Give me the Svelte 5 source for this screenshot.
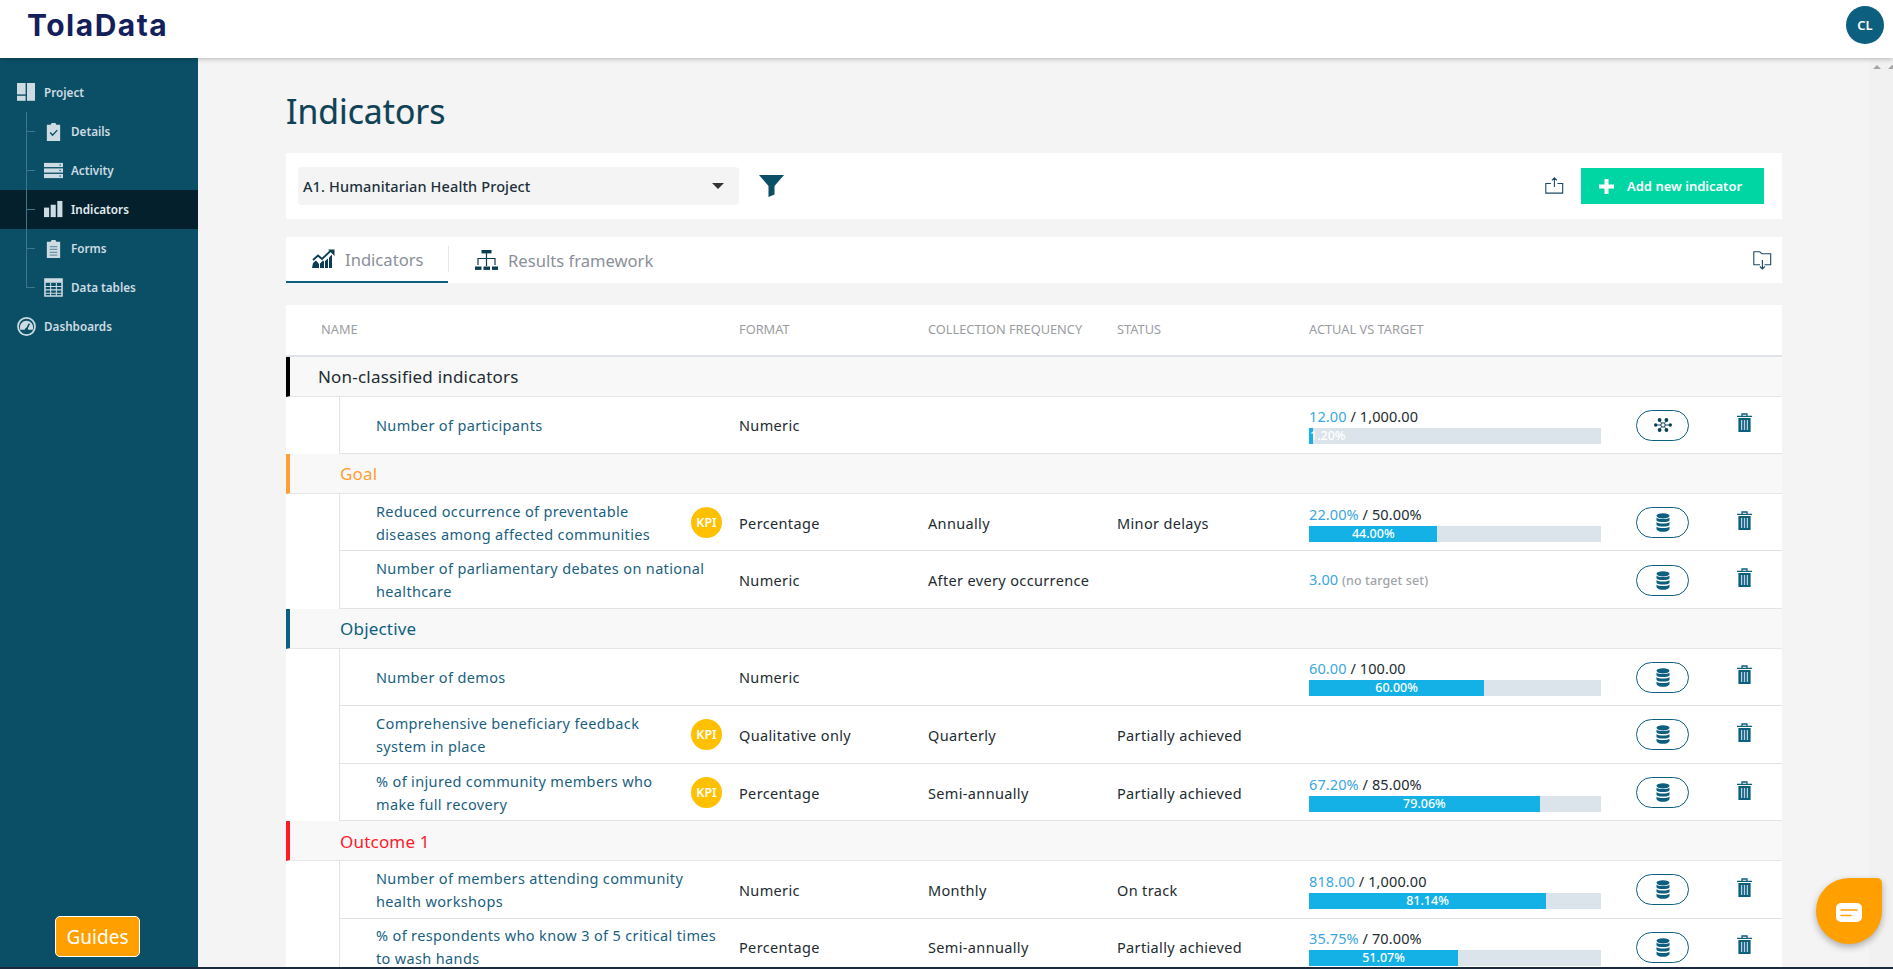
<script lang="ts">
	type Row = {
		name: string[];
		kpi?: boolean;
		format: string;
		freq?: string;
		status?: string;
		actual?: string;
		target?: string;
		percent?: number;
		label?: string;
		noTarget?: boolean;
		linked?: boolean;
	};
	type Level = { title: string; color: string; top?: boolean; rows: Row[] };

	const nav = [
		{ label: 'Details', icon: 'details' },
		{ label: 'Activity', icon: 'activity' },
		{ label: 'Indicators', icon: 'indicators', active: true },
		{ label: 'Forms', icon: 'forms' },
		{ label: 'Data tables', icon: 'tables' }
	];

	const levels: Level[] = [
		{
			title: 'Non-classified indicators',
			color: '#000000',
			top: true,
			rows: [
				{ name: ['Number of participants'], format: 'Numeric', actual: '12.00', target: '1,000.00', percent: 1.2, label: '1.20%', linked: true }
			]
		},
		{
			title: 'Goal',
			color: '#ff9f33',
			rows: [
				{ name: ['Reduced occurrence of preventable', 'diseases among affected communities'], kpi: true, format: 'Percentage', freq: 'Annually', status: 'Minor delays', actual: '22.00%', target: '50.00%', percent: 44, label: '44.00%' },
				{ name: ['Number of parliamentary debates on national', 'healthcare'], format: 'Numeric', freq: 'After every occurrence', actual: '3.00', noTarget: true }
			]
		},
		{
			title: 'Objective',
			color: '#0d5f7f',
			rows: [
				{ name: ['Number of demos'], format: 'Numeric', actual: '60.00', target: '100.00', percent: 60, label: '60.00%' },
				{ name: ['Comprehensive beneficiary feedback', 'system in place'], kpi: true, format: 'Qualitative only', freq: 'Quarterly', status: 'Partially achieved' },
				{ name: ['% of injured community members who', 'make full recovery'], kpi: true, format: 'Percentage', freq: 'Semi-annually', status: 'Partially achieved', actual: '67.20%', target: '85.00%', percent: 79.06, label: '79.06%' }
			]
		},
		{
			title: 'Outcome 1',
			color: '#ff1a2b',
			rows: [
				{ name: ['Number of members attending community', 'health workshops'], format: 'Numeric', freq: 'Monthly', status: 'On track', actual: '818.00', target: '1,000.00', percent: 81.14, label: '81.14%' },
				{ name: ['% of respondents who know 3 of 5 critical times', 'to wash hands'], format: 'Percentage', freq: 'Semi-annually', status: 'Partially achieved', actual: '35.75%', target: '70.00%', percent: 51.07, label: '51.07%' }
			]
		}
	];
</script>

{#snippet navIcon(kind: string)}
	<svg class="nav-icon" viewBox="0 0 20 20" fill="#cddbe2">
		{#if kind === 'details'}
			<path d="M3 3h4l1-2h4l1 2h4v17H3z" />
			<path d="M6.5 11l2.5 3 5-5.5" fill="none" stroke="#0b4f66" stroke-width="1.4" />
		{:else if kind === 'activity'}
			<rect x="0" y="2" width="20" height="4.4" />
			<rect x="0" y="7.8" width="20" height="4.4" />
			<rect x="0" y="13.6" width="20" height="4.4" />
			<circle cx="17" cy="4.2" r="0.8" fill="#0b4f66" />
			<circle cx="17" cy="10" r="0.8" fill="#0b4f66" />
			<circle cx="17" cy="15.8" r="0.8" fill="#0b4f66" />
		{:else if kind === 'indicators'}
			<rect x="0" y="8" width="5.4" height="10" />
			<rect x="7" y="5" width="5.4" height="13" />
			<rect x="14" y="1" width="5.4" height="17" />
		{:else if kind === 'forms'}
			<path d="M3 3h4l1-2h4l1 2h4v17H3z" />
			<path d="M6 8h8M6 11h8M6 14h8M6 17h8" stroke="#6d93a8" stroke-width="1.4" />
		{:else}
			<path d="M1 1h18v18H1z" fill="none" stroke="#cddbe2" stroke-width="1.6" />
			<rect x="1" y="1" width="18" height="4" />
			<path d="M1 9h18M1 12.5h18M1 16h18M7 5v14M13 5v14" stroke="#cddbe2" stroke-width="1.1" />
		{/if}
	</svg>
{/snippet}

{#snippet dbIcon()}
	<svg class="db" viewBox="0 0 14 19" fill="#0d5f7f">
		<ellipse cx="7" cy="2.8" rx="6.5" ry="2.6" />
		<path d="M.5 4.6C2 6.600 12 6.600 13.5 4.600v3C12 9.600 2 9.600.5 7.600z" />
		<path d="M.5 9C2 11 12 11 13.5 9v3C12 14 2 14 .5 12z" />
		<path d="M.5 13.400C2 15.400 12 15.400 13.500 13.400v2.800C12 19.600 2 19.600.5 16.200z" />
	</svg>
{/snippet}

{#snippet netIcon()}
	<svg class="net" viewBox="0 0 18 14" fill="#0b3f55">
		<path d="M1 7h16M5 2l8 10M13 2L5 12" stroke="#0b3f55" stroke-width="0.9" />
		<circle cx="9" cy="7" r="2.2" fill="#fff" stroke="#0b3f55" stroke-width="1" />
		<circle cx="1.700" cy="7" r="1.700" />
		<circle cx="16.300" cy="7" r="1.700" />
		<circle cx="5.600" cy="2" r="1.900" />
		<circle cx="12.400" cy="2" r="1.900" />
		<circle cx="5.600" cy="12" r="1.900" />
		<circle cx="12.400" cy="12" r="1.900" />
	</svg>
{/snippet}

{#snippet trashIcon()}
	<svg class="trash" viewBox="0 0 15 19">
		<path d="M5 3V1h5v2M0 3.4h15" fill="none" stroke="#0d5f7f" stroke-width="1.3" />
		<path d="M1.4 5h12.2v14H1.4z" fill="#0d5f7f" />
		<path d="M4.6 7v10M7.5 7v10M10.4 7v10" stroke="#b9d2dd" stroke-width="1.3" />
	</svg>
{/snippet}

<div class="page">
	<header class="topbar">
		<span class="logo">TolaData</span>
		<span class="avatar">CL</span>
	</header>

	<div class="body">
		<aside class="sidebar">
			<a class="nav-top">
				<svg class="nav-icon top" viewBox="0 0 19 19" fill="#cddbe2">
					<rect x="0" y="0" width="8.6" height="11.4" />
					<rect x="0" y="12.8" width="8.6" height="5" />
					<rect x="10" y="0" width="8" height="17.8" />
				</svg>
				Project
			</a>
			<div class="tree">
				{#each nav as item (item.label)}
					<a class="nav-sub" class:active={item.active}>
						<span class="tick"></span>
						{@render navIcon(item.icon)}
						{item.label}
					</a>
				{/each}
			</div>
			<a class="nav-top">
				<svg class="nav-icon top" viewBox="0 0 20 20">
					<circle cx="10" cy="10" r="9" fill="none" stroke="#cddbe2" stroke-width="1.8" />
					<path d="M3.5 13.5a7 7 0 1 1 13 0z" fill="#cddbe2" />
					<path d="M10 13l3-6" stroke="#0b4f66" stroke-width="1.6" />
					<circle cx="10" cy="13" r="1.6" fill="#0b4f66" />
				</svg>
				Dashboards
			</a>
			<button class="guides">Guides</button>
		</aside>

		<main class="main">
			<h1>Indicators</h1>

			<section class="toolbar">
				<div class="select">
					<span>A1. Humanitarian Health Project</span>
					<i class="caret"></i>
				</div>
				<svg class="filter" viewBox="0 0 25 22"><path d="M0 0h25L15.5 11v8.5L9.5 22V11z" fill="#0b4f66" /></svg>
				<div class="spacer"></div>
				<svg class="share" viewBox="0 0 19 19" fill="none" stroke="#1d4a63" stroke-width="1.1">
					<path d="M6 6.5H.8v9.6h16.9V6.5H12.5M9.4 10V1M6.9 3.4L9.4.9l2.5 2.5" />
				</svg>
				<button class="add">
					<svg viewBox="0 0 15 15"><path d="M5.5 0h4v5.5H15v4H9.5V15h-4V9.500H0v-4h5.500z" fill="#fff" /></svg>
					Add new indicator
				</button>
			</section>

			<nav class="tabs">
				<div class="tab current">
					<svg class="tab-icon" viewBox="0 0 23 20" fill="#0b3d52">
						<path d="M0 19l1-5 3-2.500 3 3.500v4zM8 14.500l3-3 1 1V19H8zM13 12l3-2.500V19h-3zM17 8.500l3-3V19h-3z" />
						<path d="M1 11l5-4.500 4 3.500 9-8.500" fill="none" stroke="#0b3d52" stroke-width="1.8" />
						<path d="M16 .5h6.500V7z" />
					</svg>
					Indicators
				</div>
				<i class="tab-sep"></i>
				<div class="tab">
					<svg class="tab-icon" viewBox="0 0 23 20" fill="#0b3d52">
						<rect x="6.500" y="0" width="10" height="3.400" />
						<rect x="0" y="16.500" width="6.500" height="3.400" />
						<rect x="8.500" y="16.500" width="6.500" height="3.400" />
						<rect x="17" y="16.500" width="6" height="3.400" />
						<path d="M11.500 3v13M3 15V8.500h17V15" fill="none" stroke="#0b3d52" stroke-width="1.200" />
					</svg>
					Results framework
				</div>
				<div class="spacer"></div>
				<svg class="share down" viewBox="0 0 19 19" fill="none" stroke="#1d4a63" stroke-width="1.1">
					<path d="M7 13.800H.8V.8h6l2 2h8.900v11H11.500M9.400 9v9M6.900 15.500l2.500 2.500 2.500-2.500" />
				</svg>
			</nav>

			<section class="table">
				<div class="thead">
					<span class="th-name">Name</span>
					<span>Format</span>
					<span>Collection frequency</span>
					<span>Status</span>
					<span>Actual vs target</span>
				</div>

				{#each levels as level (level.title)}
					<div class="level" class:top={level.top} style="border-left-color: {level.color}; color: {level.top ? '#222b30' : level.color}">
						{level.title}
					</div>
					{#each level.rows as row (row.name[0])}
						<div class="row">
							<div class="name">
								<div>
									{#each row.name as line (line)}
										<span>{line}</span>
									{/each}
								</div>
								{#if row.kpi}<b class="kpi">KPI</b>{/if}
							</div>
							<div>{row.format}</div>
							<div>{row.freq ?? ''}</div>
							<div>{row.status ?? ''}</div>
							<div class="actual">
								{#if row.actual}
									<div class="vals">
										<em>{row.actual}</em>
										{#if row.noTarget}
											<small>(no target set)</small>
										{:else}
											/ {row.target}
										{/if}
									</div>
								{/if}
								{#if row.percent}
									<div class="bar">
										<div class="fill" style="width: {row.percent}%"></div>
										<span class="bar-label" class:tiny={row.percent < 5} style={row.percent < 5 ? '' : `width: ${row.percent}%`}>{row.label}</span>
									</div>
								{/if}
							</div>
							<div class="pill-cell">
								<button class="pill">
									{#if row.linked}{@render netIcon()}{:else}{@render dbIcon()}{/if}
								</button>
							</div>
							<div class="trash-cell">{@render trashIcon()}</div>
						</div>
					{/each}
				{/each}
			</section>
		</main>

		<div class="scroll">
			<i></i>
			<i></i>
		</div>
	</div>
	<div class="bottom-edge"></div>

	<button class="chat" aria-label="Chat">
		<svg viewBox="0 0 26 19">
			<rect x="0" y="0" width="26" height="19" rx="5" fill="#fff" />
			<path d="M5 7h16M5 12.500h10" stroke="#ff9f00" stroke-width="1.600" stroke-linecap="round" />
		</svg>
	</button>
</div>

<style>
	:global(body) {
		margin: 0;
	}

	.page {
		position: relative;
		display: flex;
		flex-direction: column;
		height: 969px;
		overflow: hidden;
		font-family: 'Noto Sans', 'Open Sans', sans-serif;
		background: #f4f4f4;
		color: #222b30;
	}

	.topbar {
		position: relative;
		z-index: 2;
		flex: none;
		height: 58px;
		display: flex;
		align-items: center;
		justify-content: space-between;
		padding: 0 9px 0 27px;
		background: #fff;
		box-shadow: 0 1px 5px rgba(0, 0, 0, 0.25);
		box-sizing: border-box;
	}

	.logo {
		font-family: Inter, 'Noto Sans', sans-serif;
		font-weight: 700;
		font-size: 30px;
		letter-spacing: 1.5px;
		color: #151f5c;
		margin-top: -9px;
	}

	.avatar {
		display: grid;
		place-items: center;
		width: 38px;
		height: 38px;
		border-radius: 50%;
		background: #0d5f7f;
		color: #fff;
		font-size: 13px;
		font-weight: 600;
		margin-top: -8px;
	}

	.body {
		flex: 1;
		min-height: 0;
		display: flex;
	}

	.sidebar {
		position: relative;
		flex: none;
		width: 198px;
		box-sizing: border-box;
		padding-top: 15px;
		background: #0b4f66;
	}

	.nav-top,
	.nav-sub {
		display: flex;
		align-items: center;
		height: 39px;
		box-sizing: border-box;
		padding-bottom: 1px;
		color: #cddbe2;
		font-size: 11.7px;
		font-weight: 600;
	}

	.nav-top {
		padding-left: 17px;
	}

	.nav-icon {
		flex: none;
		width: 19px;
		height: 19px;
		margin-right: 8px;
	}

	.tree {
		position: relative;
	}

	.tree::before {
		content: '';
		position: absolute;
		left: 26px;
		top: 0;
		bottom: 20px;
		width: 1px;
		background: #41758a;
		z-index: 1;
	}

	.nav-sub {
		position: relative;
		padding-left: 44px;
	}

	.nav-sub .nav-icon {
		margin-right: 8px;
	}

	.nav-sub.active {
		background: #03202c;
		color: #e3edf1;
	}

	.tick {
		position: absolute;
		left: 26px;
		top: 19px;
		width: 9px;
		height: 1px;
		background: #41758a;
	}

	.guides {
		position: absolute;
		left: 55px;
		bottom: 10px;
		width: 85px;
		height: 41px;
		border: 1px solid #fff;
		border-radius: 5px;
		background: #ffa000;
		color: #fff;
		font: 400 19px 'Noto Sans', sans-serif;
	}

	.main {
		flex: 1;
		min-width: 0;
		padding: 0 87px 0 88px;
		overflow: hidden;
	}

	h1 {
		margin: 0;
		padding-top: 28px;
		height: 67px;
		font-size: 33.7px;
		line-height: 50px;
		font-weight: 400;
		color: #0f4256;
		-webkit-text-stroke: 0.2px #0f4256;
	}

	.toolbar,
	.tabs {
		display: flex;
		align-items: center;
		background: #fff;
	}

	.toolbar {
		height: 66px;
		padding: 0 18px 0 12px;
	}

	.spacer {
		flex: 1;
	}

	.select {
		display: flex;
		align-items: center;
		justify-content: space-between;
		width: 441px;
		height: 38px;
		box-sizing: border-box;
		padding: 0 15px 0 5px;
		background: #f4f4f4;
		border-radius: 4px;
		font-size: 14.5px;
		font-weight: 500;
		letter-spacing: 0.12px;
		color: #20303a;
	}

	.caret {
		width: 0;
		height: 0;
		border: 6.500px solid transparent;
		border-top-color: #333;
		border-bottom: 0;
	}

	.filter {
		width: 25px;
		height: 22px;
		margin-left: 20px;
	}

	.share {
		width: 19px;
		height: 19px;
		margin-right: 17px;
	}

	.add {
		display: flex;
		align-items: center;
		width: 183px;
		height: 36px;
		padding: 0 0 0 18px;
		border: 0;
		background: #00d6a3;
		color: #fff;
		font: 600 13px 'Noto Sans', sans-serif;
	}

	.add svg {
		width: 15px;
		height: 15px;
		margin-right: 13px;
	}

	.tabs {
		height: 46px;
		margin-top: 18px;
	}

	.tab {
		display: flex;
		align-items: center;
		height: 100%;
		box-sizing: border-box;
		padding-left: 26px;
		font-size: 16.6px;
		color: #8a909a;
	}

	.tab.current {
		width: 162px;
		border-bottom: 2px solid #0d5f7f;
	}

	.tab-icon {
		width: 23px;
		height: 20px;
		margin-right: 10px;
	}

	.tab-sep {
		width: 1px;
		height: 26px;
		margin-top: -2px;
		background: #e8e8e8;
	}

	.share.down {
		margin-right: 10px;
	}

	.table {
		margin-top: 22px;
		background: #fff;
	}

	.thead {
		display: grid;
		grid-template-columns: 453px 189px 189px 192px 1fr;
		align-items: center;
		height: 52px;
		box-sizing: border-box;
		padding-bottom: 2px;
		border-bottom: 2px solid #dfe2e8;
		font-size: 12.8px;
		text-transform: uppercase;
		color: #9a9da2;
	}

	.th-name {
		padding-left: 35px;
	}

	.level {
		display: flex;
		align-items: center;
		height: 39.600px;
		box-sizing: border-box;
		padding: 1px 0 0 50px;
		background: #f8f8f8;
		border-left: 4px solid;
		border-bottom: 1px solid #e6e6e6;
		font-size: 17px;
		letter-spacing: 0.2px;
	}

	.level.top {
		padding-left: 28px;
	}

	.row {
		display: grid;
		grid-template-columns: 399px 189px 189px 192px 327px 101px 1fr;
		align-items: center;
		height: 57.600px;
		box-sizing: border-box;
		padding-top: 1px;
		margin-left: 53px;
		border-left: 1px solid #e3e3e3;
		border-bottom: 1px solid #e3e3e3;
		font-size: 14.5px;
		letter-spacing: 0.35px;
		color: #222b30;
	}

	.name {
		display: flex;
		align-items: center;
		justify-content: space-between;
		padding: 0 17px 0 36px;
		line-height: 23px;
		color: #1a5f7f;
	}

	.name span {
		display: block;
		white-space: nowrap;
	}

	.kpi {
		display: grid;
		place-items: center;
		flex: none;
		width: 31px;
		height: 31px;
		border-radius: 50%;
		background: #ffc000;
		color: #fff;
		font-size: 12.5px;
		font-weight: 600;
		letter-spacing: 0;
	}

	.actual {
		display: flex;
		flex-direction: column;
	}

	.vals {
		line-height: 21px;
		padding-bottom: 1px;
		white-space: nowrap;
		letter-spacing: 0.1px;
	}

	.vals em {
		font-style: normal;
		color: #3aa7e0;
	}

	.vals small {
		font-size: 12.5px;
		font-weight: 500;
		color: #a0a4a8;
	}

	.bar {
		position: relative;
		width: 292px;
		height: 16px;
		background: #dbe4ea;
	}

	.fill {
		height: 100%;
		background: #14b1e7;
	}

	.bar-label {
		position: absolute;
		left: 0;
		top: 0;
		text-align: center;
		color: #fff;
		font-size: 12.5px;
		font-weight: 500;
		line-height: 16px;
		letter-spacing: 0;
	}

	.bar-label.tiny {
		left: 1px;
	}

	.pill {
		display: grid;
		place-items: center;
		width: 53px;
		height: 31px;
		padding: 0;
		border: 1px solid #0d5f7f;
		border-radius: 16px;
		background: #fff;
	}

	.db {
		width: 14px;
		height: 19px;
	}

	.net {
		width: 18px;
		height: 14px;
	}

	.trash {
		display: block;
		width: 15px;
		height: 19px;
		margin-top: -5px;
	}

	.scroll {
		flex: none;
		display: flex;
		gap: 7px;
		width: 24px;
		padding-left: 4px;
		box-sizing: border-box;
		overflow: hidden;
		background: #f1f1f1;
	}

	.scroll i {
		flex: none;
		width: 0;
		height: 0;
		margin-top: 7px;
		border: 4px solid transparent;
		border-bottom-color: #a5a5a5;
		border-top: 0;
	}

	.bottom-edge {
		flex: none;
		height: 2px;
		background: #1b2a3d;
	}

	.chat {
		position: absolute;
		left: 1816px;
		top: 878px;
		display: grid;
		place-items: center;
		width: 66px;
		height: 66px;
		padding: 0;
		border: 0;
		border-radius: 33px 5px 33px 33px;
		background: #ff9f00;
		box-shadow: 0 3px 7px rgba(0, 0, 0, 0.3);
	}

	.chat svg {
		width: 26px;
		height: 19px;
		margin-top: 2px;
	}
</style>
